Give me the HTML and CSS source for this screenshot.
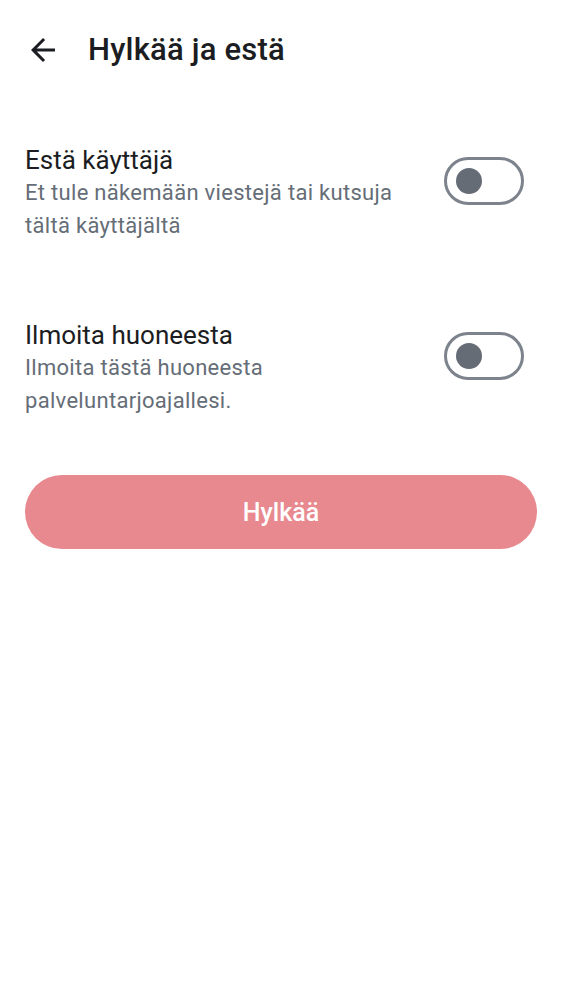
FILE: index.html
```html
<!DOCTYPE html>
<html lang="fi">
<head>
<meta charset="utf-8">
<link rel="stylesheet" href="styles.css">
</head>
<body>
<div class="screen">
  <header class="topbar">
    <svg class="back" width="36" height="36" viewBox="0 0 24 24"><path d="M20 11H7.83l5.59-5.59L12 4l-8 8 8 8 1.41-1.41L7.83 13H20v-2z" fill="#1b1d22"/></svg>
    <h1 class="title">Hylkää ja estä</h1>
  </header>
  <section class="settings">
    <div class="row">
      <div class="texts">
        <div class="row-title">Estä käyttäjä</div>
        <div class="row-sub">Et tule näkemään viestejä tai kutsuja tältä käyttäjältä</div>
      </div>
      <div class="toggle"><span class="knob"></span></div>
    </div>
    <div class="row">
      <div class="texts">
        <div class="row-title">Ilmoita huoneesta</div>
        <div class="row-sub">Ilmoita tästä huoneesta palveluntarjoajallesi.</div>
      </div>
      <div class="toggle"><span class="knob"></span></div>
    </div>
  </section>
  <div class="actions">
    <button class="decline">Hylkää</button>
  </div>
</div>
</body>
</html>
```

FILE: styles.css
```css
* { box-sizing: border-box; }
html, body { margin: 0; padding: 0; background: #fff; }
body { font-family: Roboto, "Noto Sans", sans-serif; color: #1b1d22; }
.screen { width: 562px; padding: 0 25px; }
.topbar { display: flex; align-items: center; height: 100px; gap: 27px; }
.back { display: block; flex: none; }
.title { margin: 0; font-size: 31px; font-weight: 500; letter-spacing: 0.2px; line-height: 36px; }
.settings { display: flex; flex-direction: column; gap: 77px; padding-top: 44px; }
.row { display: flex; align-items: flex-start; justify-content: space-between; }
.texts { width: 395px; }
.row-title { font-size: 26px; line-height: 32px; color: #1b1d22; }
.row-sub { font-size: 22px; line-height: 33px; color: #656d77; letter-spacing: 0.3px; }
.toggle { width: 80px; height: 48px; margin-top: 13px; border: 3px solid #7d838c; border-radius: 24px; display: flex; align-items: center; padding-left: 9px; margin-right: 13px; flex: none; }
.knob { width: 26px; height: 26px; border-radius: 50%; background: #656c76; }
.actions { padding-top: 58px; }
.decline { display: block; width: 100%; height: 74px; border: none; border-radius: 37px; background: #e8898f; color: #fff; font-family: Roboto, sans-serif; font-size: 25px; font-weight: 500; padding: 0; }
```
